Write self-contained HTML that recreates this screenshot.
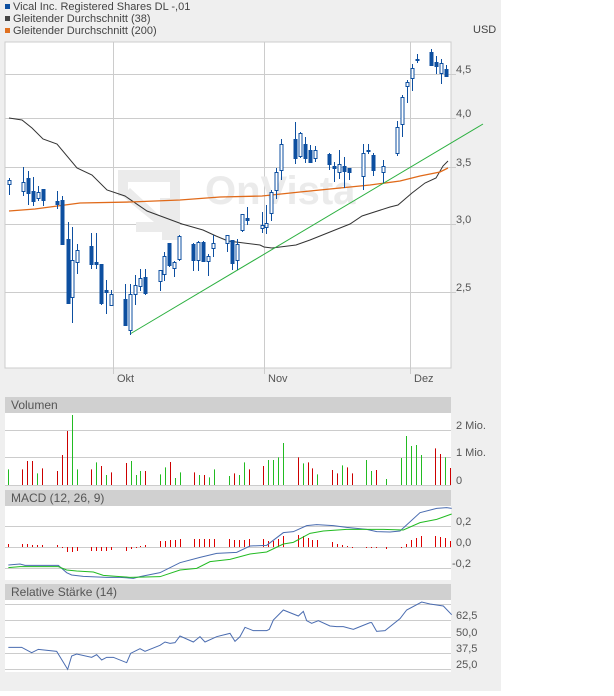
<!DOCTYPE html>
<html><head><meta charset="utf-8"><style>
body{margin:0;width:614px;height:691px;background:#fff;overflow:hidden;font-family:"Liberation Sans",sans-serif}
</style></head><body>
<svg id="s" width="614" height="691" xmlns="http://www.w3.org/2000/svg" font-family="Liberation Sans, sans-serif">
<rect x="0" y="0" width="501" height="691" fill="#efefef"/>
<rect x="5" y="4" width="5" height="5" fill="#0d4fa0"/>
<rect x="5" y="16" width="5" height="5" fill="#444"/>
<rect x="5" y="28" width="5" height="5" fill="#e07020"/>
<g font-size="11" fill="#444">
<text x="13" y="10">Vical Inc. Registered Shares DL -,01</text>
<text x="13" y="22">Gleitender Durchschnitt (38)</text>
<text x="13" y="34">Gleitender Durchschnitt (200)</text>
<text x="473" y="33">USD</text>
</g>
<rect x="5" y="42" width="446" height="326" fill="#fff" stroke="#ccc"/>
<g stroke="#ccc" stroke-width="1">
<line x1="5" x2="456" y1="74.5" y2="74.5"/><line x1="5" x2="456" y1="118.5" y2="118.5"/>
<line x1="5" x2="456" y1="167.5" y2="167.5"/><line x1="5" x2="456" y1="224.5" y2="224.5"/>
<line x1="5" x2="456" y1="292.5" y2="292.5"/>
<line x1="113.5" x2="113.5" y1="42" y2="374"/><line x1="264.5" x2="264.5" y1="42" y2="374"/><line x1="410.5" x2="410.5" y1="42" y2="374"/>
</g>
<g fill="#555" font-size="11">
<text x="456" y="73">4,5</text><text x="456" y="117">4,0</text><text x="456" y="166">3,5</text>
<text x="456" y="223">3,0</text><text x="456" y="291">2,5</text>
<text x="117" y="382">Okt</text><text x="268" y="382">Nov</text><text x="414" y="382">Dez</text>
</g>
<g fill="#ebebeb">
<path d="M118 170h62v70h-18v-12h8v-46h-42v14h-10z"/>
<path d="M122 196l8-8 30 28v-18h10v34h-34v-10h18z"/>
<text x="205" y="204" font-size="40" font-weight="bold">OnVista</text>
</g>
<g id="main"></g>
<rect x="5" y="397" width="446" height="16" fill="#d0d0d0"/>
<rect x="5" y="413" width="446" height="72" fill="#fff"/>
<rect x="5" y="490" width="446" height="16" fill="#d0d0d0"/>
<rect x="5" y="506" width="446" height="74" fill="#fff"/>
<rect x="5" y="584" width="446" height="16" fill="#d0d0d0"/>
<rect x="5" y="600" width="446" height="72" fill="#fff"/>
<g stroke="#ccc">
<line x1="5" x2="451" y1="430.5" y2="430.5"/><line x1="5" x2="451" y1="457.5" y2="457.5"/><line x1="5" x2="451" y1="485.5" y2="485.5"/>
<line x1="5" x2="451" y1="526.5" y2="526.5"/><line x1="5" x2="451" y1="547.5" y2="547.5"/><line x1="5" x2="451" y1="568.5" y2="568.5"/>
<line x1="5" x2="451" y1="604.5" y2="604.5"/><line x1="5" x2="451" y1="620.5" y2="620.5"/><line x1="5" x2="451" y1="637.5" y2="637.5"/><line x1="5" x2="451" y1="653.5" y2="653.5"/><line x1="5" x2="451" y1="669.5" y2="669.5"/>
</g>
<g fill="#555" font-size="12">
<text x="11" y="409">Volumen</text><text x="11" y="502">MACD (12, 26, 9)</text><text x="11" y="596">Relative Stärke (14)</text>
</g>
<g fill="#555" font-size="11">
<text x="456" y="429">2 Mio.</text><text x="456" y="456">1 Mio.</text><text x="456" y="484">0</text>
<text x="456" y="525">0,2</text><text x="456" y="546">0,0</text><text x="452" y="567">-0,2</text>
<text x="456" y="619">62,5</text><text x="456" y="636">50,0</text><text x="456" y="652">37,5</text><text x="456" y="668">25,0</text>
</g>
<g id="low"></g>
</svg>
<script>
var NS="http://www.w3.org/2000/svg";
function el(p,t,a){var e=document.createElementNS(NS,t);for(var k in a)e.setAttribute(k,a[k]);p.appendChild(e);return e;}
var m=document.getElementById("main"),lo=document.getElementById("low");
function pl(p,pts,c,w){el(p,"polyline",{points:pts.map(function(q){return q.join(",")}).join(" "),fill:"none",stroke:c,"stroke-width":w||1});}
pl(m,[[9,118],[22,120],[32,128],[43,139],[57,144],[77,168],[92,175],[107,190],[125,196],[147,211],[182,224],[203,230],[216,236],[228,241],[260,245],[264,247],[272,248],[296,245],[310,240],[320,236],[340,228],[350,224],[362,216],[390,207],[398,205],[412,193],[425,183],[436,178],[443,166],[448,161]],"#333");
pl(m,[[9,211],[35,209],[80,203],[130,202],[180,200],[220,197],[262,196],[300,192],[340,188],[370,185],[400,181],[420,176],[440,172],[448,168]],"#e06a1a",1.3);
pl(m,[[130,334],[483,124]],"#2cb040");
var c=[[9,178,195,180,184,0],[23,167,196,182,191,0],[28,171,205,178,193,1],[33,177,206,191,201,1],[38,186,201,192,198,0],[43,189,206,189,200,1],[57,191,209,201,204,1],[62,196,245,200,244,1],[68,222,302,239,303,1],[72,227,323,260,297,0],[77,244,274,250,262,0],[91,233,269,246,264,1],[96,233,269,262,264,1],[101,264,305,264,303,1],[106,280,314,290,292,1],[111,290,305,294,305,0],[125,284,326,299,325,1],[130,284,335,294,330,0],[135,275,305,285,294,0],[140,269,291,278,286,0],[145,269,295,277,293,1],[160,270,291,270,281,0],[164,252,281,256,274,0],[169,243,267,243,265,1],[174,261,277,262,268,0],[179,235,261,236,259,0],[193,243,271,244,260,1],[198,241,271,242,260,0],[203,241,262,242,261,1],[208,254,276,256,261,0],[213,235,257,243,248,0],[227,235,252,235,243,0],[232,240,270,240,263,1],[237,239,270,244,260,0],[242,214,232,214,230,0],[247,207,225,218,220,1],[262,212,233,225,228,0],[266,205,234,223,227,0],[271,190,221,192,213,0],[276,168,199,172,190,0],[281,139,180,144,170,0],[295,122,164,139,158,1],[300,132,158,133,156,0],[305,137,163,144,158,1],[310,145,163,150,162,1],[315,146,162,150,158,0],[329,153,170,154,164,1],[334,162,182,166,168,1],[339,150,179,164,172,0],[344,157,188,166,171,1],[349,168,180,168,172,1],[363,144,190,153,176,0],[368,144,154,150,151,1],[373,153,176,155,170,1],[383,160,183,166,172,0],[397,121,156,127,153,0],[402,95,137,97,124,0],[407,80,103,82,86,0],[412,64,91,68,78,0],[417,54,63,59,60,1],[431,49,66,52,65,1],[436,56,74,62,66,1],[441,59,84,63,73,0],[446,65,76,69,76,1]];
c.forEach(function(d){el(m,"line",{x1:d[0]+.5,x2:d[0]+.5,y1:d[1],y2:d[2],stroke:"#0d4fa0"});
el(m,"rect",{x:d[0]-1,y:d[3]+.5,width:3,height:Math.max(1,d[4]-d[3]),fill:d[5]?"#0d4fa0":"#fff",stroke:"#0d4fa0"});});
var v=[[8,'g',268],[22,'r',268],[27,'r',243],[32,'r',243],[37,'g',280],[42,'r',265],[57,'r',273],[62,'r',225],[67,'r',153],[72,'g',105],[77,'g',268],[91,'r',268],[96,'g',247],[101,'r',258],[106,'g',285],[111,'r',277],[126,'r',249],[131,'g',243],[136,'g',285],[140,'g',273],[145,'r',273],[160,'g',283],[165,'g',262],[170,'r',246],[175,'g',294],[180,'g',277],[194,'r',277],[199,'g',285],[204,'r',285],[209,'g',292],[214,'g',268],[229,'g',288],[234,'r',280],[239,'g',285],[244,'g',247],[249,'r',268],[263,'r',258],[268,'g',240],[273,'g',240],[278,'g',232],[283,'g',189],[298,'r',232],[303,'g',250],[308,'r',247],[312,'r',265],[317,'g',283],[332,'r',270],[337,'r',280],[342,'g',256],[347,'r',262],[352,'r',280],[366,'g',240],[371,'g',273],[376,'r',270],[386,'g',297],[401,'g',234],[406,'g',168],[411,'g',198],[416,'g',195],[421,'g',225],[435,'r',205],[440,'r',222],[445,'g',232],[450,'r',264]];
v.forEach(function(d){el(lo,"line",{x1:d[0]+.5,x2:d[0]+.5,y1:380+d[2]/3,y2:485,stroke:d[1]=='g'?"#22bb22":"#cc0000"});});
var h=[[8,-3],[22,-3],[27,-3],[32,-2],[37,-2],[42,-2],[57,-2],[62,1],[67,5],[72,5],[77,4],[91,4],[96,4],[101,4],[106,4],[111,3],[126,4],[131,2],[136,1],[140,-1],[145,-2],[160,-6],[165,-6],[170,-7],[175,-7],[180,-8],[194,-8],[199,-8],[204,-8],[209,-8],[214,-8],[229,-8],[234,-7],[239,-7],[244,-7],[249,-8],[263,-8],[268,-6],[273,-6],[278,-8],[283,-11],[298,-12],[303,-11],[308,-9],[312,-7],[317,-7],[332,-5],[337,-3],[342,-2],[347,-1],[352,1],[366,1],[371,1],[376,1],[386,2],[401,1],[406,-3],[411,-7],[416,-9],[421,-11],[435,-11],[440,-10],[445,-9],[450,-6]];
h.forEach(function(d){el(lo,"line",{x1:d[0]+.5,x2:d[0]+.5,y1:547,y2:547+d[1],stroke:"#dd0000"});});
function cv(a){return a.map(function(q){return [q[0]/3,380+q[1]/3]})}
pl(lo,cv([[25,555],[60,552],[75,556],[175,556],[200,578],[215,585],[250,589],[320,592],[360,592],[400,595],[420,590],[480,578],[540,548],[600,532],[650,520],[710,517],[750,498],[800,496],[850,458],[880,455],[920,437],[950,434],[1000,437],[1040,442],[1100,448],[1130,455],[1170,456],[1200,453],[1260,398],[1310,385],[1340,383],[1355,385]]),"#4a6cb0");
pl(lo,cv([[25,563],[60,560],[175,560],[200,570],[230,573],[280,576],[310,586],[350,589],[390,592],[480,590],[540,570],[590,565],[630,545],[690,538],[750,522],[800,516],[850,492],[880,487],[930,460],[970,453],[1040,448],[1150,448],[1210,450],[1260,428],[1310,418],[1355,402]]),"#22bb22");
pl(lo,cv([[25,802],[65,802],[95,818],[115,808],[170,814],[203,868],[215,828],[230,822],[275,832],[290,824],[305,840],[320,832],[340,832],[380,848],[392,820],[420,806],[435,814],[480,796],[495,786],[510,790],[525,788],[540,768],[580,786],[600,770],[615,786],[650,770],[690,760],[705,784],[720,770],[735,742],[760,752],[800,752],[808,748],[820,720],[850,690],[895,708],[910,694],[920,722],[935,730],[955,722],[990,738],[1010,740],[1030,740],[1060,748],[1070,744],[1110,728],[1115,728],[1130,754],[1155,752],[1200,716],[1220,690],[1265,666],[1290,672],[1330,678],[1355,704]]),"#4a6cb0");
</script>
</body></html>
